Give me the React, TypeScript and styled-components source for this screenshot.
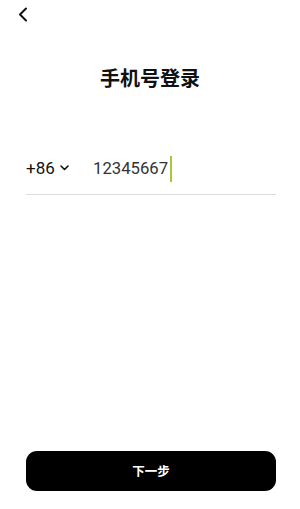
import React from "react";
import styled, { createGlobalStyle } from "styled-components";

const Global = createGlobalStyle`
  html, body { margin: 0; padding: 0; background: #fff; }
  body { font-family: Roboto, "Noto Sans CJK SC", "Noto Sans", sans-serif; }
  * { box-sizing: border-box; }
`;

const Page = styled.div`
  width: 300px;
  height: 509px;
  display: flex;
  flex-direction: column;
  background: #fff;
`;

const TopBar = styled.div`
  height: 30px;
  display: flex;
  align-items: center;
  padding-left: 15px;
`;

const BackButton = styled.button`
  border: none;
  background: none;
  padding: 0;
  width: 14px;
  height: 16px;
  display: flex;
  align-items: center;
  justify-content: center;
  margin-top: -2px;
`;

const Title = styled.h1`
  margin: 34px 0 0;
  text-align: center;
  font-family: "Noto Sans CJK SC", sans-serif;
  font-size: 20px;
  font-weight: 700;
  line-height: 28px;
  color: #111;
`;

const Form = styled.div`
  margin: 53px 24px 0 26px;
  border-bottom: 1px solid #dcdcdc;
  height: 50px;
  display: flex;
  align-items: center;
  padding-bottom: 3px;
`;

const Code = styled.div`
  display: flex;
  align-items: center;
  gap: 5px;
  font-size: 17px;
  color: #111;
  width: 67px;
`;

const Phone = styled.div`
  display: flex;
  align-items: center;
  font-size: 16.7px;
  color: #333;
`;

const Caret = styled.span`
  display: inline-block;
  width: 2px;
  height: 26px;
  background: #a6c93a;
  margin-left: 2px;
  margin-top: 1px;
`;

const Spacer = styled.div`
  flex: 1;
`;

const NextButton = styled.button`
  margin: 0 24px 18px 26px;
  height: 40px;
  border: none;
  border-radius: 11px;
  background: #000;
  color: #fff;
  font-family: "Noto Sans CJK SC", sans-serif;
  font-size: 12.5px;
  font-weight: 700;
  padding-bottom: 2px;
`;

export default function App() {
  return (
    <Page>
      <Global />
      <TopBar>
        <BackButton aria-label="back">
          <svg width="11" height="15" viewBox="0 0 11 15">
            <path d="M9 1.5 L3 7.5 L9 13.5" fill="none" stroke="#111" strokeWidth="2" strokeLinecap="round" strokeLinejoin="round" />
          </svg>
        </BackButton>
      </TopBar>
      <Title>手机号登录</Title>
      <Form>
        <Code>
          <span>+86</span>
          <svg width="9" height="6" viewBox="0 0 9 6">
            <path d="M1 1 L4.5 4.5 L8 1" fill="none" stroke="#111" strokeWidth="1.6" strokeLinecap="round" strokeLinejoin="round" />
          </svg>
        </Code>
        <Phone>
          <span>12345667</span>
          <Caret />
        </Phone>
      </Form>
      <Spacer />
      <NextButton>下一步</NextButton>
    </Page>
  );
}
